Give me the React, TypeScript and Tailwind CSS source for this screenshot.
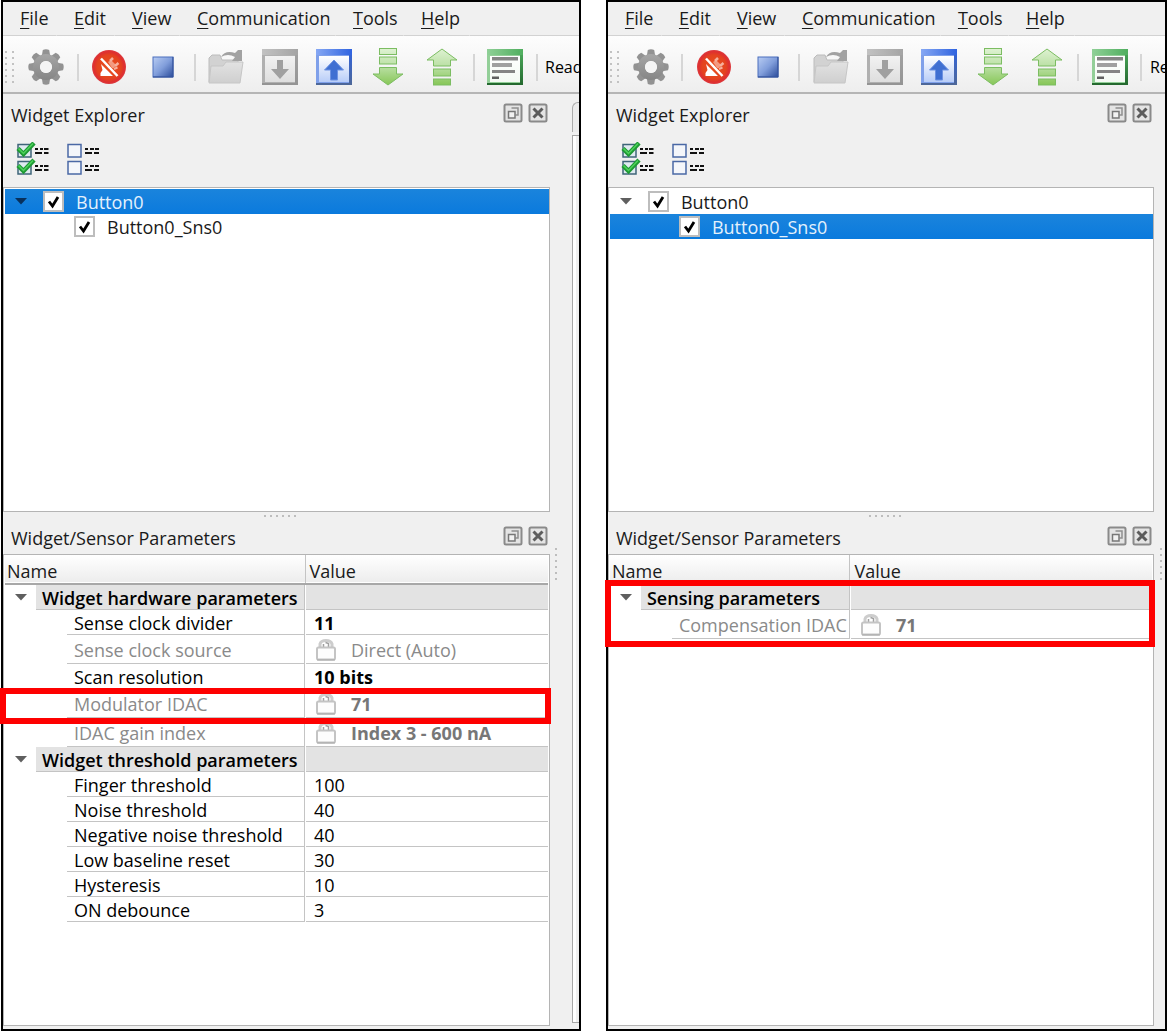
import React from "react";

/* ---------- toolbar icons ---------- */

function GearIcon() {
  return (
    <svg width="36" height="36" viewBox="-18 -18 36 36">
      <defs>
        <linearGradient id="gear" x1="0" y1="0" x2="0" y2="1">
          <stop offset="0" stopColor="#a6a6a6" />
          <stop offset="1" stopColor="#858585" />
        </linearGradient>
      </defs>
      <g fill="#929292">
        {[0, 45, 90, 135, 180, 225, 270, 315].map((a) => (
          <path key={a} d="M-4.4 -10 L-3.2 -17 Q0 -18.4 3.2 -17 L4.4 -10Z" transform={`rotate(${a})`} />
        ))}
      </g>
      <path
        fillRule="evenodd"
        fill="url(#gear)"
        d="M0 -13A13 13 0 1 1 0 13A13 13 0 1 1 0 -13ZM0 -6A6 6 0 1 0 0 6A6 6 0 1 0 0 -6Z"
      />
      <circle r="6" fill="#f4f4f4" />
    </svg>
  );
}

function DisconnectIcon() {
  return (
    <svg width="36" height="36" viewBox="0 0 36 36">
      <defs>
        <radialGradient id="red" cx="0.5" cy="0.5" r="0.5">
          <stop offset="0" stopColor="#e8501f" />
          <stop offset="0.7" stopColor="#e4431f" />
          <stop offset="0.9" stopColor="#de2f30" />
          <stop offset="1" stopColor="#dc3c40" />
        </radialGradient>
      </defs>
      <circle cx="18" cy="18" r="17" fill="url(#red)" />
      <path d="M10 15L22 27H9.500V24L11.500 21Z" fill="#fff" />
      <path d="M10 9.500L26.500 27" stroke="#fff" strokeWidth="2.500" />
      <path d="M17 13L20 11L25 16L23 19L21 19Z" fill="#f39a80" />
      <path d="M19 12L22 9M24 17L27.500 14" stroke="#f6b09c" strokeWidth="2.500" />
      <path d="M23 20L26.500 18.500" stroke="#f6b09c" strokeWidth="2" />
    </svg>
  );
}

function StopIcon() {
  return (
    <svg width="22" height="22" viewBox="0 0 22 22">
      <defs>
        <linearGradient id="stop" x1="0" y1="0" x2="1" y2="1">
          <stop offset="0" stopColor="#b9cdf3" />
          <stop offset="0.5" stopColor="#819edb" />
          <stop offset="1" stopColor="#2b4c9b" />
        </linearGradient>
      </defs>
      <rect x="1" y="1" width="20" height="20" fill="url(#stop)" stroke="#4a6fbe" />
      <path d="M1 21H21V1" fill="none" stroke="#2c4a92" />
    </svg>
  );
}

function FolderIcon() {
  return (
    <svg width="38" height="36" viewBox="0 0 38 36">
      <defs>
        <linearGradient id="folder" x1="0" y1="0" x2="0" y2="1">
          <stop offset="0" stopColor="#e2e2e2" />
          <stop offset="1" stopColor="#cfcfcf" />
        </linearGradient>
      </defs>
      <path d="M2 33V9L5 6H13L15 11H31V33Z" fill="#d2d2d2" stroke="#bcbcbc" />
      <path d="M2 34L4 17H16L19 13H36L33 34Z" fill="url(#folder)" stroke="#c6c6c6" />
      <path d="M14 8Q18 1 28 4L31 1H35V12H25L28 8Q21 4 14 8Z" fill="#a2a2a2" />
    </svg>
  );
}

function WindowIcon({ kind }: { kind: "down" | "up" | "text" }) {
  const c = {
    down: { bar: "#a4a4a4", bar2: "#c2c2c2", edge: "#b0b0b0", dark: "#949494", fill: "#f2f2f2", fill2: "#dedede" },
    up: { bar: "#2f63e0", bar2: "#86a8f4", edge: "#7fa0ea", dark: "#4d6799", fill: "#ffffff", fill2: "#b8cdf8" },
    text: { bar: "#4fae5e", bar2: "#8fd097", edge: "#93cf98", dark: "#24692f", fill: "#ffffff", fill2: "#f4faf4" },
  }[kind];
  return (
    <svg width="38" height="38" viewBox="0 0 38 38">
      <defs>
        <linearGradient id={`bar-${kind}`} x1="0" y1="0" x2="1" y2="0">
          <stop offset="0" stopColor={c.bar2} />
          <stop offset="1" stopColor={c.bar} />
        </linearGradient>
        <linearGradient id={`side-${kind}`} x1="0" y1="0" x2="0" y2="1">
          <stop offset="0" stopColor={c.bar} />
          <stop offset="1" stopColor={c.dark} />
        </linearGradient>
        <linearGradient id={`body-${kind}`} x1="0" y1="0" x2="0" y2="1">
          <stop offset="0" stopColor={c.fill} />
          <stop offset="1" stopColor={c.fill2} />
        </linearGradient>
      </defs>
      <rect x="1" y="1" width="36" height="36" fill={c.edge} />
      <rect x="34" y="1" width="3" height="36" fill={`url(#side-${kind})`} />
      <rect x="1" y="35" width="36" height="2" fill={c.dark} />
      <rect x="1" y="1" width="36" height="6" fill={`url(#bar-${kind})`} />
      <rect x="4" y="8" width="30" height="26" fill={`url(#body-${kind})`} />
      {kind === "down" && <path d="M16 12H22V21H28L19 31L10 21H16Z" fill="#a0a0a0" />}
      {kind === "up" && <path d="M15.500 32V22H9.500L19 12L28.500 22H22.500V32Z" fill="#3f6fd2" stroke="#6d92e2" />}
      {kind === "text" && (
        <g fill="#858585">
          <rect x="6" y="9" width="26" height="3.500" />
          <rect x="6" y="15" width="20" height="4" fill="#a0a0a0" />
          <rect x="6" y="22" width="23" height="3" />
          <rect x="6" y="28.500" width="7" height="2.500" fill="#606060" />
        </g>
      )}
    </svg>
  );
}

function GreenArrow({ up }: { up?: boolean }) {
  const id = up ? "green-up" : "green-down";
  return (
    <svg width="34" height="38" viewBox="0 0 34 38">
      <defs>
        <linearGradient id={id} gradientUnits="userSpaceOnUse" x1="0" y1="0" x2="0" y2="38">
          <stop offset="0" stopColor="#e0f3d4" />
          <stop offset="0.5" stopColor="#b9dfa3" />
          <stop offset="1" stopColor="#84c552" />
        </linearGradient>
      </defs>
      {up ? (
        <g stroke="#7cbd62" fill={`url(#${id})`}>
          <path d="M17 1L32 12H25.500V18H8.500V12H2Z" />
          <rect x="8.500" y="21" width="17" height="7" />
          <rect x="8.500" y="31" width="17" height="6" />
        </g>
      ) : (
        <g stroke="#7cbd62" fill={`url(#${id})`}>
          <rect x="8.500" y="0.500" width="17" height="6" />
          <rect x="8.500" y="9" width="17" height="7" />
          <path d="M8.500 19.500H25.500V26H32L17 37L2 26H8.500Z" />
        </g>
      )}
    </svg>
  );
}

/* ---------- small icons ---------- */

function CheckAllIcon() {
  return (
    <svg width="34" height="34" viewBox="0 0 34 34">
      {[0, 17].map((y) => (
        <g key={y} transform={`translate(0 ${y})`}>
          <rect x="3" y="2.500" width="13" height="12.500" fill="#dfeaf0" stroke="#3f6579" strokeWidth="1.500" />
          <path d="M3 6.500L8.500 12L19 1" fill="none" stroke="#1e9a34" strokeWidth="4.500" />
          <path d="M3.500 6.500L8.500 11.500L18 1.500" fill="none" stroke="#4fd35c" strokeWidth="1.500" />
          <path d="M20 7H23M25 7H28M29 7H33.500M20 11H27M29 11H33.500" stroke="#111" strokeWidth="2" />
        </g>
      ))}
    </svg>
  );
}

function UncheckAllIcon() {
  return (
    <svg width="34" height="34" viewBox="0 0 34 34">
      {[0, 17].map((y) => (
        <g key={y} transform={`translate(0 ${y})`}>
          <rect x="2" y="2.500" width="13" height="12.500" fill="#f4f6fa" stroke="#4a68a5" strokeWidth="1.500" />
          <path d="M19 7H22M24 7H28M29 7H33M19 11H26M28 11H33" stroke="#111" strokeWidth="2" />
        </g>
      ))}
    </svg>
  );
}

function FloatIcon() {
  return (
    <svg width="20" height="20" viewBox="0 0 20 20">
      <rect x="1.500" y="1.500" width="17" height="17" rx="1.500" fill="#e4e4e4" stroke="#8a8a8a" strokeWidth="2" />
      <path d="M8.500 5H15V12H12.500" fill="none" stroke="#8f8f8f" strokeWidth="1.500" />
      <rect x="5.500" y="8.500" width="6.500" height="6.500" fill="#f2f2f2" stroke="#777" strokeWidth="1.500" />
    </svg>
  );
}

function CloseIcon() {
  return (
    <svg width="20" height="20" viewBox="0 0 20 20">
      <rect x="1.500" y="1.500" width="17" height="17" rx="1.500" fill="#e4e4e4" stroke="#8a8a8a" strokeWidth="2" />
      <path d="M5.500 5.500L14.500 14.500M14.500 5.500L5.500 14.500" stroke="#5c5c5c" strokeWidth="3" />
    </svg>
  );
}

function LockIcon() {
  return (
    <svg width="24" height="24" viewBox="0 0 24 24" className="shrink-0">
      <path d="M6 10V6Q7 2.500 12 2.500Q17 2.500 18 6V10" fill="none" stroke="#cdcdcd" strokeWidth="3" />
      <path d="M9.500 9V6M14.500 9V5.500L11.500 4.500" fill="none" stroke="#a0a0a0" strokeWidth="1.500" />
      <rect x="3" y="9.500" width="18" height="12" rx="1.500" fill="#fdfdfd" stroke="#c4c4c4" strokeWidth="2" />
      <path d="M3 22H21" stroke="#a4a4a4" />
    </svg>
  );
}

function Triangle({ selected }: { selected?: boolean }) {
  return (
    <svg width="12" height="7" viewBox="0 0 12 7" className="shrink-0">
      <path d="M0 0H12L6 6.500Z" fill={selected ? "#08305c" : "#5f5f5f"} />
    </svg>
  );
}

/* ---------- window parts ---------- */

const menus = [
  { label: "File", width: "w-[54px]" },
  { label: "Edit", width: "w-[58px]" },
  { label: "View", width: "w-[65px]" },
  { label: "Communication", width: "w-[156px]" },
  { label: "Tools", width: "w-[68px]" },
  { label: "Help", width: "w-[66px]" },
];

function MenuBar() {
  return (
    <nav className="flex h-[34px]">
      {menus.map((m) => (
        <button
          key={m.label}
          className={`${m.width} shrink-0 border-b border-r border-b-[#d2d2d2] border-r-[#f0f0f0] pb-0.5 pl-[17px] text-left whitespace-nowrap`}
        >
          <span className="underline decoration-1 underline-offset-3">{m.label[0]}</span>
          {m.label.slice(1)}
        </button>
      ))}
      <div className="flex-1 border-b border-[#d2d2d2]" />
    </nav>
  );
}

function ToolButton({ label, children }: { label: string; children: React.ReactNode }) {
  return (
    <button aria-label={label} className="flex h-full w-[54px] shrink-0 items-center justify-center">
      {children}
    </button>
  );
}

function ToolSeparator() {
  return (
    <div className="flex w-[9px] shrink-0 justify-center">
      <div className="h-[27px] w-0.5 bg-[#d6d6d6]" />
    </div>
  );
}

function Dots({ vertical }: { vertical?: boolean }) {
  return (
    <div className={vertical ? "flex flex-col gap-1" : "flex gap-1"}>
      {[0, 1, 2, 3, 4, 5].map((i) => (
        <span key={i} className="size-0.5 bg-[#bdbdbd]" />
      ))}
    </div>
  );
}

function ToolBar() {
  return (
    <div
      role="toolbar"
      className="flex h-[58px] items-center overflow-hidden border-b-2 border-[#b5b5b5] bg-linear-to-b from-[#fdfdfd] to-[#eeeeee] pt-1.5"
    >
      <div className="flex w-4 shrink-0 gap-[5px] pl-0.5">
        {[0, 1].map((c) => (
          <div key={c} className="flex flex-col gap-1">
            {[0, 1, 2, 3, 4, 5].map((i) => (
              <span key={i} className="size-0.5 bg-[#c2c2c2]" />
            ))}
          </div>
        ))}
      </div>
      <ToolButton label="Options"><GearIcon /></ToolButton>
      <ToolSeparator />
      <ToolButton label="Disconnect"><DisconnectIcon /></ToolButton>
      <ToolButton label="Stop"><StopIcon /></ToolButton>
      <ToolSeparator />
      <ToolButton label="Open"><FolderIcon /></ToolButton>
      <ToolButton label="Save"><WindowIcon kind="down" /></ToolButton>
      <ToolButton label="Export"><WindowIcon kind="up" /></ToolButton>
      <ToolButton label="Read from device"><GreenArrow /></ToolButton>
      <ToolButton label="Write to device"><GreenArrow up /></ToolButton>
      <ToolSeparator />
      <ToolButton label="Log"><WindowIcon kind="text" /></ToolButton>
      <ToolSeparator />
      <span className="shrink-0 pl-1 text-base text-black">Read</span>
    </div>
  );
}

function DockTitle({ title, className }: { title: string; className: string }) {
  return (
    <div className={`flex items-center pr-0.5 pl-2 ${className}`}>
      <h2 className="flex-1 whitespace-nowrap">{title}</h2>
      <div className="flex gap-[5px] pb-1">
        <button aria-label={`Float ${title}`} className="block"><FloatIcon /></button>
        <button aria-label={`Close ${title}`} className="block"><CloseIcon /></button>
      </div>
    </div>
  );
}

function TreeRow({ label, selected, child }: { label: string; selected?: boolean; child?: boolean }) {
  return (
    <li
      className={`flex h-[25px] items-center ${child ? "pl-[69px]" : "pl-2.5"} ${
        selected ? "bg-linear-to-b from-[#1a84dc] to-[#0a7add] text-[#e4f1fc]" : ""
      }`}
    >
      {!child && <Triangle selected={selected} />}
      <label className={`flex items-center ${child ? "" : "pl-4"}`}>
        <span className="grid">
          <input
            type="checkbox"
            defaultChecked
            className="peer col-start-1 row-start-1 size-[21px] appearance-none border-2 border-[#bdbdbd] bg-white"
          />
          <svg
            viewBox="0 0 21 21"
            className="pointer-events-none invisible col-start-1 row-start-1 size-[21px] peer-checked:visible"
          >
            <path d="M6 10.500L9.500 15L15 6" fill="none" stroke="#000" strokeWidth="2.800" />
          </svg>
        </span>
        <span className="pt-px pl-3 whitespace-nowrap">{label}</span>
      </label>
    </li>
  );
}

type Param = { name: string; value: string; bold?: boolean; locked?: boolean; mark?: boolean };
type Group = { title: string; mark?: boolean; params: Param[] };

function ParamTable({ groups, nameWidth }: { groups: Group[]; nameWidth: string }) {
  return (
    <table className="w-full table-fixed border-collapse">
      <colgroup>
        <col className={nameWidth} />
        <col />
      </colgroup>
      <thead>
        <tr className="h-[29px] border-b-2 border-[#a8a8a8] bg-linear-to-b from-white to-[#ededed] text-left leading-6">
          <th className="border-r border-[#c4c4c4] p-0 pt-1 pl-0.5 font-normal">Name</th>
          <th className="p-0 pt-1 pl-1 font-normal">Value</th>
        </tr>
      </thead>
      {groups.map((g) => (
        <tbody key={g.title}>
          <tr className="relative h-[25px]">
            <td className="p-0">
              {g.mark && (
                <div className="pointer-events-none absolute -top-1 -right-[3px] -left-[5px] z-10 h-[67px] border-6 border-[#fe0000]" />
              )}
              <div className="flex h-[25px] items-center">
                <div className="flex w-[31px] shrink-0 pl-2.5"><Triangle /></div>
                <div className="flex h-[25px] flex-1 items-center border-r border-b border-[#c4c4c4] bg-[#e3e3e3] pt-0.5 pl-1.5 font-semibold whitespace-nowrap text-black">
                  {g.title}
                </div>
              </div>
            </td>
            <td className="p-0">
              <div className="ml-px h-[25px] border-b border-[#c4c4c4] bg-[#e3e3e3]" />
            </td>
          </tr>
          {g.params.map((p) => {
            const h = p.locked ? "h-[29px]" : "h-[25px]";
            const tone = p.locked ? "text-[#8a8a8a]" : "text-black";
            return (
              <tr key={p.name} className={`relative ${h} ${tone}`}>
                <td className="p-0 pl-[62px]">
                  {p.mark && (
                    <div className="pointer-events-none absolute -top-px -right-[3px] -bottom-1.5 -left-[5px] z-10 border-6 border-[#fe0000]" />
                  )}
                  <div className={`flex ${h} items-center border-r border-b border-[#c4c4c4] pt-0.5 pl-[7px] whitespace-nowrap`}>
                    {p.name}
                  </div>
                </td>
                <td className="p-0">
                  <div className={`ml-px flex ${h} items-center border-b border-[#c4c4c4] pt-0.5 pl-2 whitespace-nowrap`}>
                    {p.locked && (
                      <span className="flex w-[37px] shrink-0"><LockIcon /></span>
                    )}
                    <span className={p.bold ? (p.locked ? "font-bold text-[#777]" : "font-bold") : ""}>{p.value}</span>
                  </div>
                </td>
              </tr>
            );
          })}
        </tbody>
      ))}
    </table>
  );
}

type WindowProps = {
  className: string;
  selected: "Button0" | "Button0_Sns0";
  groups: Group[];
  nameWidth: string;
  pane?: boolean;
};

function TunerWindow({ className, selected, groups, nameWidth, pane }: WindowProps) {
  return (
    <section className={`flex min-w-0 flex-col border-2 border-black bg-[#f0f0f0] ${className}`}>
      <MenuBar />
      <ToolBar />
      <div className="flex flex-1">
        <div className="flex min-w-0 flex-1 flex-col pb-[3px]">
          <DockTitle title="Widget Explorer" className="h-[42px]" />
          <div className="flex h-[51px] gap-[17px] pt-1.5 pl-3">
            <button aria-label="Check all" className="h-[34px]"><CheckAllIcon /></button>
            <button aria-label="Uncheck all" className="h-[34px]"><UncheckAllIcon /></button>
          </div>
          <ul className="h-[325px] border border-[#b4b4b4] bg-white pt-px pl-px">
            <TreeRow label="Button0" selected={selected === "Button0"} />
            <TreeRow label="Button0_Sns0" child selected={selected === "Button0_Sns0"} />
          </ul>
          <div className="flex h-2 items-center justify-center pl-2"><Dots /></div>
          <DockTitle title="Widget/Sensor Parameters" className="h-[34px] pt-0.5" />
          <div className="flex-1 border border-[#b4b4b4] bg-white pr-px pl-px">
            <ParamTable groups={groups} nameWidth={nameWidth} />
          </div>
        </div>
        <div className="flex w-[11px] shrink-0 items-center justify-center pt-1 pl-0.5"><Dots vertical /></div>
        {pane && (
          <div className="flex w-[18px] shrink-0 flex-col pt-2 pb-1.5 pl-[11px]">
            <div className="h-[30px] rounded-tl-md border-t border-l border-[#aaa] bg-[#ececec]" />
            <div className="mt-[3px] flex-1 border-y border-l border-[#a6a6a6] bg-white pl-[3px]">
              <div className="h-full bg-[#efefef]" />
            </div>
          </div>
        )}
      </div>
    </section>
  );
}

const widgetGroups: Group[] = [
  {
    title: "Widget hardware parameters",
    params: [
      { name: "Sense clock divider", value: "11", bold: true },
      { name: "Sense clock source", value: "Direct (Auto)", locked: true },
      { name: "Scan resolution", value: "10 bits", bold: true },
      { name: "Modulator IDAC", value: "71", bold: true, locked: true, mark: true },
      { name: "IDAC gain index", value: "Index 3 - 600 nA", bold: true, locked: true },
    ],
  },
  {
    title: "Widget threshold parameters",
    params: [
      { name: "Finger threshold", value: "100" },
      { name: "Noise threshold", value: "40" },
      { name: "Negative noise threshold", value: "40" },
      { name: "Low baseline reset", value: "30" },
      { name: "Hysteresis", value: "10" },
      { name: "ON debounce", value: "3" },
    ],
  },
];

const sensorGroups: Group[] = [
  {
    title: "Sensing parameters",
    mark: true,
    params: [{ name: "Compensation IDAC", value: "71", bold: true, locked: true }],
  },
];

export default function App() {
  return (
    <main className="flex min-h-screen gap-[25px] bg-white pl-px font-['Open_Sans','Noto_Sans',sans-serif] text-lg leading-6 text-[#1a1a1a]">
      <TunerWindow className="flex-[580]" selected="Button0" groups={widgetGroups} nameWidth="w-[300px]" pane />
      <TunerWindow className="flex-[561]" selected="Button0_Sns0" groups={sensorGroups} nameWidth="w-[240px]" />
    </main>
  );
}
